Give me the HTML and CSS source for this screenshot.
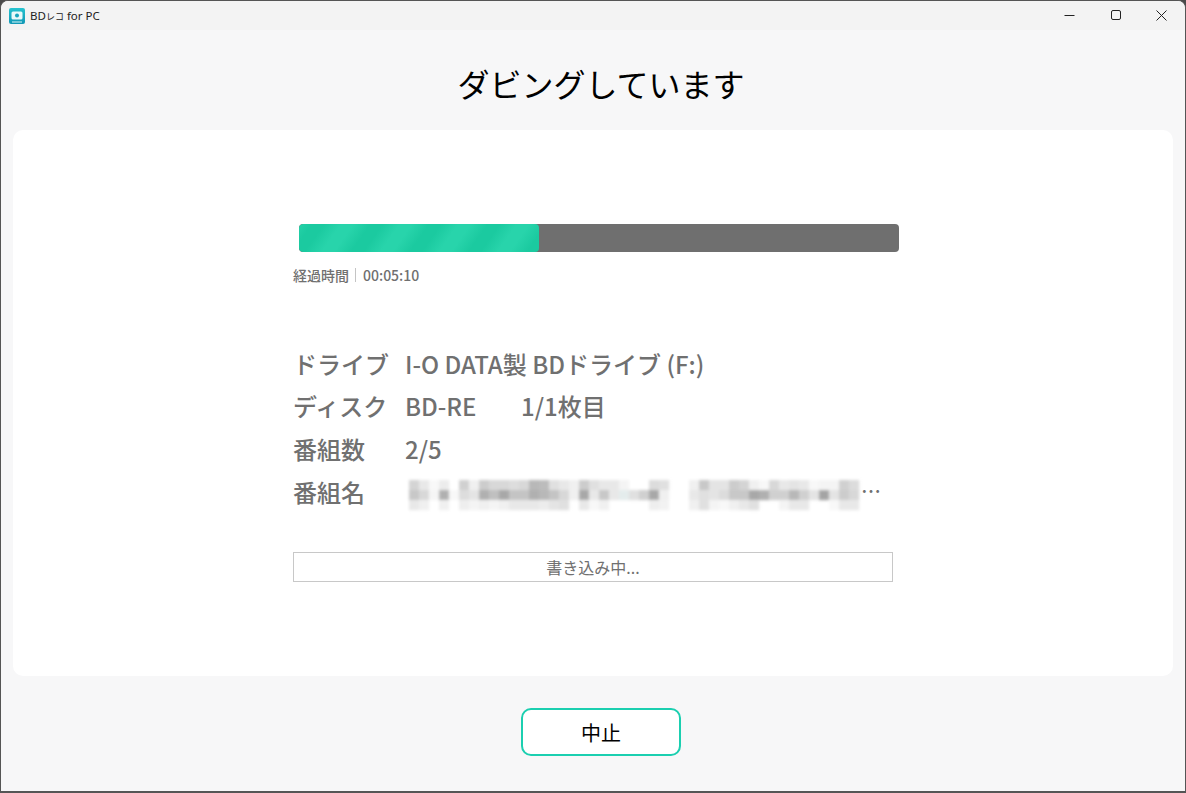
FILE: index.html
```html
<!DOCTYPE html>
<html lang="ja">
<head>
<meta charset="utf-8">
<title>BDレコ for PC</title>
<link rel="stylesheet" href="styles.css">
</head>
<body>
<div class="window">
  <header class="titlebar">
    <div class="app">
      <svg class="app-icon" width="16" height="16" viewBox="0 0 16 16">
        <defs><linearGradient id="ag" x1="0" y1="0" x2="0" y2="1"><stop offset="0" stop-color="#25c3cf"/><stop offset="1" stop-color="#1197b5"/></linearGradient></defs>
        <rect width="16" height="16" rx="2" fill="url(#ag)"/>
        <rect x="2.5" y="3.5" width="11" height="8" rx="1.5" fill="#eafafa"/>
        <circle cx="8" cy="7.5" r="2" fill="#1aa5bd"/>
        <path d="M3 14h10" stroke="#d8f4f6" stroke-width="1"/>
      </svg>
      <span class="app-name">BD<span class="kana">レコ</span> for PC</span>
    </div>
    <div class="controls">
      <svg class="ctl" width="46" height="30" viewBox="0 0 46 30"><path d="M17.5 15.5h10" stroke="#222" fill="none"/></svg>
      <svg class="ctl" width="46" height="30" viewBox="0 0 46 30"><rect x="18.5" y="10.5" width="9" height="9" rx="1.5" stroke="#222" fill="none"/></svg>
      <svg class="ctl" width="46" height="30" viewBox="0 0 46 30"><path d="M17.5 10.5l10 10M27.5 10.5l-10 10" stroke="#222" fill="none"/></svg>
    </div>
  </header>
  <h1 class="heading">ダビングしています</h1>
  <main class="card">
    <div class="panel">
      <div class="progress"><div class="progress-fill" style="width:40%"></div></div>
      <div class="elapsed"><span>経過時間</span><i class="sep"></i><span>00:05:10</span></div>
      <dl class="info">
        <div class="row"><dt>ドライブ</dt><dd>I-O DATA製 BDドライブ (F:)</dd></div>
        <div class="row"><dt>ディスク</dt><dd><span class="disc">BD-RE</span><span>1/1枚目</span></dd></div>
        <div class="row"><dt>番組数</dt><dd>2/5</dd></div>
        <div class="row"><dt>番組名</dt><dd class="name">
          <svg class="mosaic" width="450" height="30" viewBox="0 0 45 3">
            <defs><filter id="bl" x="-2%" y="-30%" width="104%" height="160%"><feGaussianBlur stdDeviation="0.16"/></filter></defs>
            <g filter="url(#bl)">
              <rect x="0" y="0" fill="#d4d4d4"/><rect x="1" y="0" fill="#e8e8e8"/><rect x="2" y="0" fill="#f8f8f8"/><rect x="3" y="0" fill="#ececec"/><rect x="5" y="0" fill="#d0d0d0"/><rect x="6" y="0" fill="#f0f0f0"/><rect x="7" y="0" fill="#cccccc"/><rect x="8" y="0" fill="#d8d8d8"/><rect x="9" y="0" fill="#d8d8d8"/><rect x="10" y="0" fill="#dddddd"/><rect x="11" y="0" fill="#d8d8d8"/><rect x="12" y="0" fill="#b8b8b8"/><rect x="13" y="0" fill="#bcbcbc"/><rect x="14" y="0" fill="#e0e0e0"/><rect x="15" y="0" fill="#e8e8e8"/><rect x="16" y="0" fill="#f0f0f0"/><rect x="17" y="0" fill="#cccccc"/><rect x="18" y="0" fill="#e0e0e0"/><rect x="19" y="0" fill="#e8e8e8"/><rect x="20" y="0" fill="#e8e8e8"/><rect x="21" y="0" fill="#f4f4f4"/>
              <rect x="24" y="0" fill="#dcdcdc"/><rect x="25" y="0" fill="#e0e0e0"/><rect x="28" y="0" fill="#f0f0f0"/><rect x="29" y="0" fill="#c8c8c8"/><rect x="30" y="0" fill="#e4e4e4"/><rect x="31" y="0" fill="#e4e4e4"/><rect x="32" y="0" fill="#cccccc"/><rect x="33" y="0" fill="#d4d4d4"/><rect x="34" y="0" fill="#f0f0f0"/><rect x="35" y="0" fill="#f8f8f8"/><rect x="36" y="0" fill="#d8d8d8"/><rect x="37" y="0" fill="#e8e8e8"/><rect x="38" y="0" fill="#e4e4e4"/><rect x="39" y="0" fill="#e8e8e8"/><rect x="40" y="0" fill="#f8f8f8"/><rect x="41" y="0" fill="#f4f4f4"/><rect x="42" y="0" fill="#f4f4f4"/><rect x="43" y="0" fill="#d0d0d0"/><rect x="44" y="0" fill="#dcdcdc"/>
              <rect x="0" y="1" fill="#c8c8c8"/><rect x="1" y="1" fill="#d8d8d8"/><rect x="2" y="1" fill="#f5f5f5"/><rect x="3" y="1" fill="#b0b0b0"/><rect x="4" y="1" fill="#f8f8f8"/><rect x="5" y="1" fill="#dddddd"/><rect x="6" y="1" fill="#e4e4e4"/><rect x="7" y="1" fill="#b0b0b0"/><rect x="8" y="1" fill="#c0c0c0"/><rect x="9" y="1" fill="#a8a8a8"/><rect x="10" y="1" fill="#c4c4c4"/><rect x="11" y="1" fill="#c4c4c4"/><rect x="12" y="1" fill="#b0b0b0"/><rect x="13" y="1" fill="#b8b8b8"/><rect x="14" y="1" fill="#c4c4c4"/><rect x="15" y="1" fill="#d8d8d8"/><rect x="16" y="1" fill="#f0f0f0"/><rect x="17" y="1" fill="#a8a8a8"/><rect x="18" y="1" fill="#e8e8e8"/><rect x="19" y="1" fill="#c8c8c8"/><rect x="20" y="1" fill="#e8e8e8"/><rect x="21" y="1" fill="#e4ecec"/><rect x="22" y="1" fill="#e0e0e0"/><rect x="23" y="1" fill="#d0d0d0"/>
              <rect x="24" y="1" fill="#a8a8a8"/><rect x="25" y="1" fill="#f0f0f0"/><rect x="28" y="1" fill="#e8e8e8"/><rect x="29" y="1" fill="#e0e0e0"/><rect x="30" y="1" fill="#e4e4e4"/><rect x="31" y="1" fill="#dcdcdc"/><rect x="32" y="1" fill="#c8c8c8"/><rect x="33" y="1" fill="#c8c8c8"/><rect x="34" y="1" fill="#a8a8a8"/><rect x="35" y="1" fill="#b0b0b0"/><rect x="36" y="1" fill="#d0d0d0"/><rect x="37" y="1" fill="#d0d0d0"/><rect x="38" y="1" fill="#b8b8b8"/><rect x="39" y="1" fill="#d0d0d0"/><rect x="40" y="1" fill="#e4e4e4"/><rect x="41" y="1" fill="#a4a4a4"/><rect x="42" y="1" fill="#e4e4e4"/><rect x="43" y="1" fill="#cccccc"/><rect x="44" y="1" fill="#d8d8d8"/>
              <rect x="0" y="2" fill="#e8e8e8"/><rect x="1" y="2" fill="#f0f0f0"/><rect x="3" y="2" fill="#f0f0f0"/><rect x="5" y="2" fill="#eeeeee"/><rect x="6" y="2" fill="#f4f4f4"/><rect x="7" y="2" fill="#f0f0f0"/><rect x="8" y="2" fill="#f4f4f4"/><rect x="9" y="2" fill="#f0f0f0"/><rect x="10" y="2" fill="#e8e8e8"/><rect x="11" y="2" fill="#e8e8e8"/><rect x="12" y="2" fill="#e8e8e8"/><rect x="13" y="2" fill="#ececec"/><rect x="14" y="2" fill="#e4e4e4"/><rect x="15" y="2" fill="#e0e0e0"/><rect x="17" y="2" fill="#e8e8e8"/><rect x="18" y="2" fill="#f8f8f8"/><rect x="19" y="2" fill="#f0f0f0"/>
              <rect x="24" y="2" fill="#eeeeee"/><rect x="25" y="2" fill="#f2f2f2"/><rect x="28" y="2" fill="#f0f0f0"/><rect x="29" y="2" fill="#e0e0e0"/><rect x="30" y="2" fill="#f4f4f4"/><rect x="31" y="2" fill="#f8f8f8"/><rect x="32" y="2" fill="#f0f0f0"/><rect x="33" y="2" fill="#e8e8e8"/><rect x="34" y="2" fill="#e0e0e0"/><rect x="37" y="2" fill="#f4f4f4"/><rect x="38" y="2" fill="#e8e8e8"/><rect x="39" y="2" fill="#e8e8e8"/><rect x="42" y="2" fill="#f8f8f8"/><rect x="43" y="2" fill="#e8e8e8"/><rect x="44" y="2" fill="#e8e8e8"/>
            </g>
          </svg>
          <span class="dots">…</span>
        </dd></div>
      </dl>
      <div class="status">書き込み中...</div>
    </div>
  </main>
  <footer class="actions"><button class="stop" type="button">中止</button></footer>
</div>
</body>
</html>
```
FILE: styles.css
```css
* { box-sizing: border-box; margin: 0; padding: 0; }
html, body { height: 100%; }
body {
  background: #4a4a4a;
  font-family: "Noto Sans CJK JP", "Noto Sans", sans-serif;
  overflow: hidden;
}
.window {
  width: 1186px;
  height: 793px;
  border: 1px solid #555;
  border-bottom-width: 2px;
  border-radius: 8px 8px 0 0;
  background: #f7f7f8;
  display: flex;
  flex-direction: column;
  overflow: hidden;
}
.titlebar {
  height: 29px;
  flex: none;
  background: #f3f3f3;
  display: flex;
  justify-content: space-between;
  align-items: center;
}
.app { display: flex; align-items: center; gap: 5px; padding-left: 8px; }
.app-icon { display: block; }
.app-name { font-size: 11.5px; color: #222; font-family: "Noto Sans", "Noto Sans CJK JP", sans-serif; }
.kana { font-size: 9px; }
.controls { display: flex; }
.ctl { display: block; margin-top: -1px; }
.heading {
  flex: none;
  height: 100px;
  padding: 6px 0 0 16px;
  display: flex;
  align-items: center;
  justify-content: center;
  font-size: 32px;
  font-weight: 400;
  color: #000;
}
.card {
  flex: none;
  height: 546px;
  margin: 0 12px;
  background: #fff;
  border-radius: 10px;
  padding: 94px 0 0 280px;
}
.panel { width: 606px; }
.progress {
  margin-left: 6px;
  width: 600px;
  height: 28px;
  border-radius: 4px;
  background: #6f6f6f;
  overflow: hidden;
}
.progress-fill {
  height: 100%;
  border-radius: 4px;
  background: repeating-linear-gradient(-55deg, #1bcaa0 0, #1bcaa0 10px, #28d4ab 24px, #28d4ab 34px, #1bcaa0 48px);
}
.elapsed {
  margin-top: 13px;
  height: 20px;
  display: flex;
  align-items: center;
  font-size: 14px;
  font-weight: 500;
  color: #707070;
}
.sep { width: 1px; height: 14px; background: #c4c4c4; margin: 0 7px 0 6px; }
.info { margin-top: 56.7px; }
.row {
  display: flex;
  align-items: center;
  height: 42.7px;
  font-size: 24px;
  font-weight: 500;
  color: #707070;
}
.row dt { width: 112px; flex: none; }
.row dd { display: flex; align-items: center; white-space: nowrap; }
.disc { width: 116px; }
.mosaic { display: block; margin: 8px 0 0 4px; flex: none; overflow: visible; }
.mosaic rect { width: 1.02px; height: 1.02px; }
.dots { font-size: 20px; margin-left: 2px; line-height: 1; }
.status {
  margin-top: 39.3px;
  width: 600px;
  height: 30px;
  border: 1px solid #c8c8c8;
  display: flex;
  align-items: center;
  justify-content: center;
  font-size: 16px;
  color: #707070;
}
.actions {
  flex: 1;
  display: flex;
  justify-content: center;
  padding: 32px 0 0 16px;
}
.stop {
  width: 160px;
  height: 48px;
  background: #fff;
  border: 2px solid #1bcfb0;
  border-radius: 10px;
  font-family: inherit;
  font-size: 20px;
  font-weight: 400;
  color: #000;
}
```
